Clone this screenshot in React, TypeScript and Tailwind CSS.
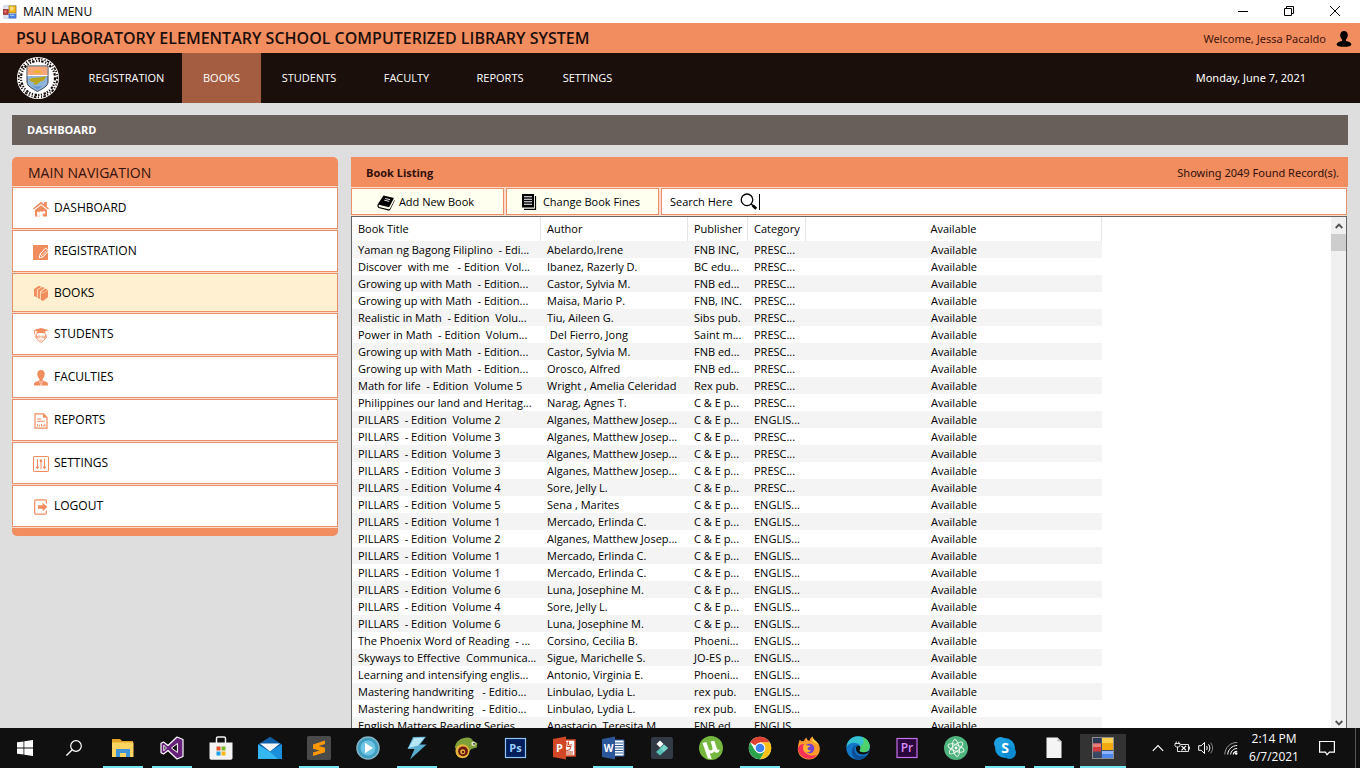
import type { ReactNode } from "react";

type Book = [title: string, author: string, publisher: string, category: string];

const books: Book[] = [
  ["Yaman ng Bagong Filiplino  - Edi...", "Abelardo,Irene", "FNB INC,", "PRESC..."],
  ["Discover  with me   - Edition  Vol...", "Ibanez, Razerly D.", "BC edu...", "PRESC..."],
  ["Growing up with Math  - Edition...", "Castor, Sylvia M.", "FNB ed...", "PRESC..."],
  ["Growing up with Math  - Edition...", "Maisa, Mario P.", "FNB, INC.", "PRESC..."],
  ["Realistic in Math  - Edition  Volu...", "Tiu, Aileen G.", "Sibs pub.", "PRESC..."],
  ["Power in Math  - Edition  Volum...", " Del Fierro, Jong", "Saint m...", "PRESC..."],
  ["Growing up with Math  - Edition...", "Castor, Sylvia M.", "FNB ed...", "PRESC..."],
  ["Growing up with Math  - Edition...", "Orosco, Alfred", "FNB ed...", "PRESC..."],
  ["Math for life  - Edition  Volume 5", "Wright , Amelia Celeridad", "Rex pub.", "PRESC..."],
  ["Philippines our land and Heritag...", "Narag, Agnes T.", "C & E p...", "PRESC..."],
  ["PILLARS  - Edition  Volume 2", "Alganes, Matthew Josep...", "C & E p...", "ENGLIS..."],
  ["PILLARS  - Edition  Volume 3", "Alganes, Matthew Josep...", "C & E p...", "PRESC..."],
  ["PILLARS  - Edition  Volume 3", "Alganes, Matthew Josep...", "C & E p...", "PRESC..."],
  ["PILLARS  - Edition  Volume 3", "Alganes, Matthew Josep...", "C & E p...", "PRESC..."],
  ["PILLARS  - Edition  Volume 4", "Sore, Jelly L.", "C & E p...", "PRESC..."],
  ["PILLARS  - Edition  Volume 5", "Sena , Marites", "C & E p...", "ENGLIS..."],
  ["PILLARS  - Edition  Volume 1", "Mercado, Erlinda C.", "C & E p...", "ENGLIS..."],
  ["PILLARS  - Edition  Volume 2", "Alganes, Matthew Josep...", "C & E p...", "ENGLIS..."],
  ["PILLARS  - Edition  Volume 1", "Mercado, Erlinda C.", "C & E p...", "ENGLIS..."],
  ["PILLARS  - Edition  Volume 1", "Mercado, Erlinda C.", "C & E p...", "ENGLIS..."],
  ["PILLARS  - Edition  Volume 6", "Luna, Josephine M.", "C & E p...", "ENGLIS..."],
  ["PILLARS  - Edition  Volume 4", "Sore, Jelly L.", "C & E p...", "ENGLIS..."],
  ["PILLARS  - Edition  Volume 6", "Luna, Josephine M.", "C & E p...", "ENGLIS..."],
  ["The Phoenix Word of Reading  - ...", "Corsino, Cecilia B.", "Phoeni...", "ENGLIS..."],
  ["Skyways to Effective  Communica...", "Sigue, Marichelle S.", "JO-ES p...", "ENGLIS..."],
  ["Learning and intensifying englis...", "Antonio, Virginia E.", "Phoeni...", "ENGLIS..."],
  ["Mastering handwriting   - Editio...", "Linbulao, Lydia L.", "rex pub.", "ENGLIS..."],
  ["Mastering handwriting   - Editio...", "Linbulao, Lydia L.", "rex pub.", "ENGLIS..."],
  ["English Matters Reading Series...", "Anastacio, Teresita M.", "FNB ed...", "ENGLIS..."],
];

function Svg({ size, children, box = 16 }: { size: string; children: ReactNode; box?: number }) {
  return (
    <svg className={`shrink-0 ${size}`} viewBox={`0 0 ${box} ${box}`} fill="none" aria-hidden="true">
      {children}
    </svg>
  );
}

const FormIcon = ({ size }: { size: string }) => (
  <Svg size={size}>
    <rect x="1" y="1" width="14" height="14" fill="#dfe6f0" stroke="#9fb0c8" strokeWidth=".6" />
    <rect x="6.8" y="1" width="8" height="8" fill="#f4b71d" stroke="#8a6a14" strokeWidth=".6" />
    <rect x="8" y="2" width="4" height="4" fill="#ffe07a" />
    <rect x=".5" y="5" width="5.4" height="6" fill="#c43a35" stroke="#7d1b19" strokeWidth=".6" />
    <rect x="1.8" y="6.5" width="2" height="2" fill="#f09a90" />
    <rect x="6.8" y="10.3" width="8" height="4.6" fill="#4b86e8" stroke="#2a57a8" strokeWidth=".6" />
    <rect x="8" y="11" width="5" height="1.6" fill="#9cc1ff" />
  </Svg>
);

const FormIconLarge = () => (
  <Svg size="size-6" box={24}>
    <rect x="1.500" y="1.500" width="21" height="21" fill="#44506a" stroke="#8d8d8d" />
    <rect x="2" y="2" width="8" height="5.500" fill="#2e3a55" />
    <rect x="2" y="7.500" width="8" height="8" fill="#d2393c" />
    <rect x="2" y="7.500" width="8" height="3.500" fill="#e87b78" />
    <rect x="2" y="16.500" width="8" height="5.500" fill="#3c4763" />
    <rect x="11" y="2" width="11" height="12" fill="#f2a90f" />
    <rect x="11" y="2" width="11" height="5" fill="#fbd04d" />
    <rect x="11" y="15" width="11" height="7" fill="#4b86e8" />
    <rect x="11" y="15" width="11" height="3" fill="#8db5fb" />
  </Svg>
);

const O = "#f18c5f";

const sideItems: { label: string; active?: boolean; icon: ReactNode }[] = [
  {
    label: "DASHBOARD",
    icon: (
      <>
        <path d="M0 7.400 8 .8l3 2.400V1h2.800v4.600L16 7.400l-.9 1.200L8 3 .9 8.600z" fill={O} />
        <path d="M2 8.900 8 4.200l6 4.700v6.600H9.800V10.500H7v5H2z" fill={O} />
        <path d="M4.200 10.800h2.600v4.700H4.200z" fill="#fff" />
        <rect x="10" y="10.300" width="2.200" height="2.400" fill="#fff" />
      </>
    ),
  },
  {
    label: "REGISTRATION",
    icon: (
      <>
        <path d="M0 1h15v15H0z" fill={O} />
        <path d="m6.200 13.800.9-3.800 5.600-6 3 2.900-5.700 6z" stroke="#fff" strokeWidth="1" fill={O} />
        <path d="m7.300 10.200 2.500 2.600M9.600 11 13.600 6.600" stroke="#fff" strokeWidth=".8" />
      </>
    ),
  },
  {
    label: "BOOKS",
    active: true,
    icon: (
      <>
        <path d="M1 4 6 .8l2.400 1L4 4.800v7.400L1 11z" fill={O} />
        <path d="M4.600 5.300 9.300 2l2.300 1L7 6.400v7.700l-2.400-1z" fill={O} />
        <path d="m7.600 6.900 5-3.300L15 5v7l-5 4-2.400-1.200z" fill={O} />
        <path d="M7.600 6.900 10 8.200 15 5M4.300 5v7.600M7.300 6.500v7.800" stroke="#fdeccb" strokeWidth=".6" />
      </>
    ),
  },
  {
    label: "STUDENTS",
    icon: (
      <>
        <path d="M0 3.200 8 1l8 2.200L8 5.600z" fill={O} />
        <path d="M3.600 4.400v2.400c2.200-1 6.600-1 8.800 0V4.400" fill={O} />
        <path d="M1.600 4v3.400" stroke={O} strokeWidth=".9" />
        <path d="M3.400 7c0 5 2 8 4.600 8s4.600-3 4.600-8M2.600 8.400c-.7 2 .3 3 1.300 3M13.400 8.400c.7 2-.3 3-1.300 3" stroke={O} strokeWidth=".9" />
        <path d="M4.600 9.200h2.600v1.600H4.600zM8.800 9.200h2.600v1.600H8.800zM6.300 13h3.400" stroke={O} strokeWidth=".7" />
      </>
    ),
  },
  {
    label: "FACULTIES",
    icon: (
      <>
        <path d="M8 0c2.500 0 3.800 1.800 3.700 4 0 2.200-1 4-2 4.800v1.600l4.300 1.800c.8.400 1 1.500 1 3.200H1c0-1.700.2-2.800 1-3.200l4.300-1.800V8.800c-1-.8-2-2.600-2-4.800C4.200 1.800 5.500 0 8 0z" fill={O} />
        <path d="M6.400 10.800 8 12l1.600-1.200-.8 4.600H7.200z" fill="#fff" />
        <path d="m8 11.600.8 1-.4 2.800h-.8l-.4-2.800z" fill={O} />
      </>
    ),
  },
  {
    label: "REPORTS",
    icon: (
      <>
        <path d="M2 .8h8.600L14 4.400v10.800H2z" stroke={O} strokeWidth="1.200" />
        <path d="M10 .8v4h4z" fill={O} />
        <path d="M4.200 6h4M4.200 8.200h7.600" stroke={O} strokeWidth="1.100" />
        <path d="M4.500 13.500v-2.300M6.500 13.500v-1.500M8.500 13.500v-2.500M10.300 13.500V12M11.900 13.500v-2.700" stroke={O} strokeWidth="1" />
      </>
    ),
  },
  {
    label: "SETTINGS",
    icon: (
      <>
        <rect x=".5" y=".5" width="15" height="15" rx=".6" stroke={O} />
        <path d="M4.500 3v10M8 3v10M11.500 3v10" stroke={O} strokeWidth="1" />
        <circle cx="4.500" cy="11.200" r="1.300" fill={O} />
        <circle cx="8" cy="5" r="1.300" fill={O} />
        <circle cx="11.500" cy="11.200" r="1.300" fill={O} />
      </>
    ),
  },
  {
    label: "LOGOUT",
    icon: (
      <>
        <path d="M13.400 4.500V2.200c0-.8-.4-1.400-1.200-1.400H3c-.8 0-1.300.6-1.300 1.400v11.600c0 .8.500 1.400 1.300 1.400h9.200c.8 0 1.200-.6 1.200-1.400v-2.300" stroke={O} strokeWidth="1.200" />
        <path d="M5 6.300h4.600V3.800L14.400 8l-4.800 4.200V9.700H5z" fill={O} />
      </>
    ),
  },
];

const topTabs = [
  { label: "REGISTRATION", cls: "w-[111px]" },
  { label: "BOOKS", cls: "w-[79px] bg-[#a45d40]" },
  { label: "STUDENTS", cls: "w-24" },
  { label: "FACULTY", cls: "w-[99px]" },
  { label: "REPORTS", cls: "w-[88px]" },
  { label: "SETTINGS", cls: "w-[87px]" },
];

const Seal = () => (
  <svg className="size-11 shrink-0" viewBox="0 0 44 44" aria-hidden="true">
    <circle cx="22" cy="22" r="21" fill="#fff" />
    <circle cx="22" cy="22" r="19.300" fill="none" stroke="#1b0f0b" strokeWidth="1.800" strokeDasharray="1.200 1.500 2.600 1.300 1 2.100" />
    <circle cx="22" cy="22" r="17" fill="none" stroke="#1b0f0b" strokeWidth="2.200" strokeDasharray="2.400 1.700 1.100 1.500 1.300 1.200" />
    <path d="M11 10h21v16c0 4-5 6.500-10.500 9.500C16 32.500 11 30 11 26z" fill="#8fb4dc" stroke="#39404c" strokeWidth="1" />
    <path d="M11.500 10.500h20v8.500h-20z" fill="#f7a678" />
    <path d="M17 16.800c1-3 8-3 9 0z" fill="#e8b71c" />
    <path d="M11.500 19.500h20" stroke="#fff" strokeWidth="1" />
    <path d="M13 23.500c3-2.500 9-1 17-3.500-1 4-3 5.500-6 5.500-2 3-4 4-7 2.500l2-2c-2 .5-5-.5-6-2.500z" fill="#b9a51c" />
    <path d="M16 29.500c3 1.500 8 1.500 11 0l-5.500 4z" fill="#5f94cf" />
  </svg>
);

type Task = { name: string; running?: boolean; active?: boolean; icon: ReactNode };

const tasks: Task[] = [
  {
    name: "Start",
    icon: <Svg size="size-4"><path d="M0 2.300 6.500 1.400v6.200H0zM7.300 1.300 16 0v7.600H7.300zM0 8.400h6.500v6.200L0 13.700zM7.300 8.400H16V16l-8.700-1.200z" fill="#fff" /></Svg>,
  },
  {
    name: "Search",
    icon: <Svg size="size-4"><circle cx="10" cy="6" r="5.300" stroke="#fff" strokeWidth="1.200" /><path d="M6.200 9.800.4 15.600" stroke="#fff" strokeWidth="1.300" /></Svg>,
  },
  {
    name: "File Explorer",
    running: true,
    icon: (
      <Svg size="size-6" box={24}>
        <path d="M1 3h8l2 2h11v16H1z" fill="#e3a529" />
        <path d="M1 6.500h21.500V21H1z" fill="#fcd462" />
        <path d="M5 13h14v8h-4v-4H9v4H5z" fill="#3f93d8" />
      </Svg>
    ),
  },
  {
    name: "Visual Studio",
    running: true,
    icon: (
      <Svg size="size-6" box={24}>
        <path d="M17 1 23 3.500v17L17 23 8 14.500 3.500 18 1 16.800V7.200L3.500 6 8 9.500z" fill="#68217a" stroke="#fff" strokeWidth="1.200" strokeLinejoin="round" />
        <path d="M17.400 7.500v9L11.500 12zM3.800 9.300v5.400L6.400 12z" fill="#111" stroke="#fff" strokeWidth="1" />
      </Svg>
    ),
  },
  {
    name: "Microsoft Store",
    icon: (
      <Svg size="size-6" box={24}>
        <path d="M7.500 7V2.500c0-1 .6-1.500 1.500-1.500h6c.9 0 1.500.5 1.500 1.500V7" stroke="#f3f3f3" strokeWidth="1.500" />
        <path d="M.5 6.500h23V22c0 1-.7 1.700-1.700 1.700H2.200C1.200 23.700.5 23 .5 22z" fill="#f3f3f3" />
        <path d="M7.500 10.500h4v4h-4z" fill="#e8522a" />
        <path d="M12.500 10.500h4v4h-4z" fill="#7db928" />
        <path d="M7.500 15.500h4v4h-4z" fill="#1aa1e2" />
        <path d="M12.500 15.500h4v4h-4z" fill="#fdb913" />
      </Svg>
    ),
  },
  {
    name: "Mail",
    icon: (
      <Svg size="size-6" box={24}>
        <path d="M0 8.500 12 .8l12 7.700V23H0z" fill="#0f5fa8" />
        <path d="M0 8.500 12 16l12-7.500V23H0z" fill="#35b8f1" />
        <path d="M2 7.500h20l-10 8z" fill="#f5f9fc" />
        <path d="m24 8.500-12 7.500L20 23h4z" fill="#1c8fdc" />
      </Svg>
    ),
  },
  {
    name: "Sublime Text",
    running: true,
    icon: (
      <Svg size="size-6" box={24}>
        <rect width="24" height="24" rx="1.500" fill="#4a4a4a" />
        <path d="m18 4.500-12 4v4.300l6.500 1.700L6 16.500V20l12-3.800v-4.400l-6.300-1.700L18 8z" fill="#ff9800" />
      </Svg>
    ),
  },
  {
    name: "Media Player",
    icon: (
      <Svg size="size-6" box={24}>
        <circle cx="12" cy="12" r="11" fill="#3f9dbf" stroke="#7fb4c4" strokeWidth="1.500" />
        <circle cx="12" cy="12" r="7.500" fill="#6fc6e4" />
        <path d="M9 6.800 17 12l-8 5.200z" fill="#fff" />
      </Svg>
    ),
  },
  {
    name: "Winamp",
    running: true,
    icon: (
      <Svg size="size-6" box={24}>
        <path d="M8 1 21 .8l-6 7.700h6.500L5 23.500 9.500 13H2.500z" fill="#5aaed0" />
        <path d="M9 2 19.500 1.500l-6.500 8-9.500 2.500z" fill="#b9e6f5" />
      </Svg>
    ),
  },
  {
    name: "Chameleon",
    icon: (
      <Svg size="size-6" box={24}>
        <path d="M.8 12C1.500 5 7 1.500 13.500 1.500c3 0 4.800 1.500 5.800 4l4.200 1.700-.8 4.300-5.200 1.500L13 17z" fill="#7f9f3a" />
        <circle cx="8.500" cy="15.300" r="7" fill="#e7b53c" />
        <circle cx="9" cy="15.300" r="4.900" fill="#6b1713" />
        <circle cx="8.700" cy="15.700" r="2.500" fill="#e7b53c" />
        <circle cx="9" cy="16" r="1.200" fill="#6b1713" />
        <circle cx="19.500" cy="7.800" r="2.200" fill="#dfe5c8" />
        <circle cx="20" cy="7.800" r=".9" fill="#222" />
      </Svg>
    ),
  },
  {
    name: "Photoshop",
    icon: (
      <Svg size="size-6" box={24}>
        <rect x="2.500" y="2.500" width="20" height="19" fill="#001d5c" stroke="#8cc5f5" strokeWidth="1.200" />
        <text x="12.500" y="16" textAnchor="middle" fontSize="11" fontWeight="700" fill="#9bd0fb">Ps</text>
      </Svg>
    ),
  },
  {
    name: "PowerPoint",
    icon: (
      <Svg size="size-6" box={24}>
        <path d="M12 4h11v16H12z" fill="#fff" stroke="#d24726" strokeWidth="1.500" />
        <path d="M15 6.500a4 4 0 1 0 4 4h-4zM16.500 5.500v3.500H20M14 16h7M14 18h7" stroke="#d24726" strokeWidth="1" />
        <path d="m1 3 13-2.500v23L1 21z" fill="#d24726" />
        <text x="7.500" y="16" textAnchor="middle" fontSize="11" fontWeight="700" fill="#fff">P</text>
      </Svg>
    ),
  },
  {
    name: "Word",
    running: true,
    icon: (
      <Svg size="size-6" box={24}>
        <path d="M12 4h11v16H12z" fill="#fff" stroke="#2b579a" strokeWidth="1" />
        <path d="M14 7h8M14 9.500h8M14 12h8M14 14.500h8M14 17h8" stroke="#2b579a" strokeWidth="1.200" />
        <path d="m1 3 13-2.500v23L1 21z" fill="#2b579a" />
        <text x="7.500" y="16" textAnchor="middle" fontSize="10" fontWeight="700" fill="#fff">W</text>
      </Svg>
    ),
  },
  {
    name: "Filmora",
    icon: (
      <Svg size="size-6" box={24}>
        <rect x="1" y="1" width="22" height="22" rx="2.500" fill="#323a45" />
        <path d="m10 4.500 3.500 3.500-3.500 3.500L6.500 8z" fill="#fff" />
        <path d="m14 8.500 4 3.500-8 7.500L6 16z" fill="#55bfb4" />
        <path d="m14 8.500 4 3.500-4 3.700-4-3.500z" fill="#7ad3c8" />
      </Svg>
    ),
  },
  {
    name: "uTorrent",
    icon: (
      <Svg size="size-6" box={24}>
        <circle cx="12" cy="12" r="12" fill="#76b83f" />
        <path d="M3.500 7 7.300 6 9.800 13c.7 2 3.400 1.800 3.700 0 .3-1.600-1-4.500-1.900-7.500l3.700-.8 2.700 8c.5 1.400 1.500 1.300 2.600.7 0 1.900-1.300 3.200-2.900 3.300-1.200.1-2-.4-2.600-1.400-.7 1.600-2.300 2.500-4.300 2l1.900 5.800-3.700-.5z" fill="#fff" />
      </Svg>
    ),
  },
  {
    name: "Chrome",
    running: true,
    icon: (
      <Svg size="size-6" box={24}>
        <circle cx="12" cy="12" r="11.200" fill="#fff" />
        <path d="M12 12 2.300 6.400A11.200 11.200 0 0 1 21.700 6.400H12z" fill="#e0402f" />
        <path d="M21.700 6.400A11.200 11.200 0 0 1 12 23.200l5-8.400L12 6.400z" fill="#fbc116" />
        <path d="M2.300 6.400A11.200 11.200 0 0 0 12 23.200l4.800-8.400H7.100z" fill="#2ba24c" />
        <circle cx="12" cy="12" r="5.400" fill="#fff" />
        <circle cx="12" cy="12" r="4.300" fill="#3f80ee" />
      </Svg>
    ),
  },
  {
    name: "Firefox",
    icon: (
      <Svg size="size-6" box={24}>
        <path d="M2.500 4c1 0 1.800.8 2.300 1.600C5.500 5 6 5 7 5.200 7.300 3.500 8.300 2.200 9.500 1.500c0 2 1.500 2.700 3 3.500C12.800 3 14 1 15.500.5 15.500 3.500 20 5 22 9c3 7-2.500 14.500-10 14.500S.5 18 .8 12.500C.9 9 2 7 2.500 4z" fill="#ff9a2c" />
        <path d="M1 13c1 9 13 13.500 19.500 5.500-2.500 1.500-6 1.500-8.500.5C6 17 5 12 7 8 4 8 1 10 1 13z" fill="#f5315b" />
        <circle cx="12.500" cy="12.500" r="4.800" fill="#7342d0" />
        <path d="M6.500 9.500c3-.8 4.500.5 7 .3-1 1.500-2.800 1.500-3 2.700 0 1.400 2 2.300 3.500 1.500-1 3-6 3.500-7.600-.3z" fill="#ffb42e" />
        <path d="M15.500.5C15.500 3.500 20 5 22 9c-1.500-1.500-2.500-1.500-4-2-2.500-1-3.500-3-2.500-6.500z" fill="#ffd83d" />
      </Svg>
    ),
  },
  {
    name: "Edge",
    icon: (
      <Svg size="size-6" box={24}>
        <circle cx="12" cy="12" r="11.700" fill="#1478c8" />
        <path d="M.4 11C1.200 4.500 6 .3 12 .3c7 0 11.700 4.700 11.700 10 0 4-3 6-6.500 6-2.500 0-4-1-3.700-2 1.200-1.500 1.500-3 .3-4.800C11.500 5.600 3.500 5.600.4 11z" fill="#35c1d0" />
        <path d="M16 1c4.800 1.500 7.700 5.300 7.700 9.300 0 4-3 6-6.500 6-2.500 0-4-1-3.700-2 1.200-1.500 1.500-3 .3-4.800C18 10 19 5 16 1z" fill="#4fd06b" />
        <path d="M8.500 13c0 6 6 9.200 13 5.500-2.500 3.500-5.500 5.200-9.500 5.200C7 22.500 4.500 17 6.500 12.500c1-2.500 3.500-3.800 5.700-3.300C9.500 9.500 8.500 11 8.500 13z" fill="#0c4f98" />
        <path d="M13.500 14.300c-.3 1 1.200 2 3.700 2 2 0 4-.4 6.300-1.600-1 3-6.500 5-10.500 3-2.500-1.500-3.500-4.200-3-6 .5-1.700 2.300-2.300 3.600-1.600 1 1.500 1 2.800-.1 4.200z" fill="#111" />
      </Svg>
    ),
  },
  {
    name: "Premiere",
    icon: (
      <Svg size="size-6" box={24}>
        <rect x="2" y="2.500" width="20" height="19" fill="#29063b" stroke="#c372ea" strokeWidth="1.200" />
        <text x="12" y="16" textAnchor="middle" fontSize="12" fontWeight="600" fill="#d78cf7">Pr</text>
      </Svg>
    ),
  },
  {
    name: "Atom",
    icon: (
      <Svg size="size-6" box={24}>
        <circle cx="12" cy="12" r="12" fill="#4fb37e" />
        <g stroke="#e6f5ec" strokeWidth="1">
          <ellipse cx="12" cy="12" rx="8.500" ry="3.200" transform="rotate(20 12 12)" />
          <ellipse cx="12" cy="12" rx="8.500" ry="3.200" transform="rotate(80 12 12)" />
          <ellipse cx="12" cy="12" rx="8.500" ry="3.200" transform="rotate(140 12 12)" />
        </g>
        <circle cx="12" cy="12" r="1.400" fill="#fff" />
      </Svg>
    ),
  },
  {
    name: "Skype",
    running: true,
    icon: (
      <Svg size="size-6" box={24}>
        <circle cx="12" cy="12" r="10" fill="#1499de" />
        <circle cx="7.500" cy="7.500" r="6.500" fill="#1d9fe2" />
        <circle cx="16.500" cy="16.500" r="6.500" fill="#0d8bd2" />
        <text x="12" y="17" textAnchor="middle" fontSize="14" fontWeight="700" fill="#fff">S</text>
      </Svg>
    ),
  },
  {
    name: "Document",
    running: true,
    icon: (
      <Svg size="size-6" box={24}>
        <path d="M4.500 1.500h11l4 4V22h-15z" fill="#f4f4f4" />
        <path d="M15.500 1.500v4h4z" fill="#bdbdbd" />
      </Svg>
    ),
  },
  { name: "Library System", running: true, active: true, icon: <FormIconLarge /> },
];

const columns = [
  { label: "Book Title", cls: "w-[189px] pl-[6px] text-left" },
  { label: "Author", cls: "w-[147px] pl-[6px] text-left" },
  { label: "Publisher", cls: "w-[60px] pl-[6px] text-left" },
  { label: "Category", cls: "w-[58px] pl-[6px] text-left" },
  { label: "Available", cls: "w-[296px] text-center" },
];

export default function App() {
  return (
    <div className="flex h-screen flex-col overflow-hidden bg-[#dedede] font-['Open_Sans','Noto_Sans',sans-serif] text-[11px] text-black">
      <div className="flex h-[23px] shrink-0 items-center bg-white pl-[3px]">
        <FormIcon size="size-[14px]" />
        <span className="ml-[6px] text-[12px] leading-4">MAIN MENU</span>
        <div className="mr-[2px] ml-auto flex h-full items-center">
          <button type="button" aria-label="Minimize" className="flex h-full w-[46px] items-center justify-center pb-[2px]">
            <Svg size="size-3" box={12}><path d="M1 6.500h10" stroke="#000" /></Svg>
          </button>
          <button type="button" aria-label="Restore" className="flex h-full w-[46px] items-center justify-center pb-[2px]">
            <Svg size="size-3" box={12}><path d="M1.500 3.500h7v7h-7zM3.500 3V1.500h7v7H9" stroke="#000" /></Svg>
          </button>
          <button type="button" aria-label="Close" className="flex h-full w-[46px] items-center justify-center pb-[2px]">
            <Svg size="size-3" box={12}><path d="m1 1 10 10M11 1 1 11" stroke="#000" /></Svg>
          </button>
        </div>
      </div>

      <header className="flex h-[30px] shrink-0 items-center justify-between bg-[#f28d60] pr-2 pl-4">
        <h1 className="text-[16px] leading-5 font-semibold text-[#1c0f0b]">PSU LABORATORY ELEMENTARY SCHOOL COMPUTERIZED LIBRARY SYSTEM</h1>
        <div className="flex items-center gap-[10px] pt-px">
          <span className="font-['Noto_Sans',sans-serif] text-[11px] leading-4 text-[#421509]">Welcome, Jessa Pacaldo</span>
          <Svg size="size-4">
            <path d="M8 0c2.400 0 3.800 1.700 3.800 4 0 1.900-.8 3.600-1.900 4.500v1.500c3 .6 5.500 1.500 5.500 3.500 0 1.700-3.500 2.300-7.400 2.300S.6 15.200.6 13.500c0-2 2.500-2.900 5.500-3.500V8.500C5 7.600 4.200 5.900 4.200 4 4.200 1.700 5.600 0 8 0z" fill="#000" />
          </Svg>
        </div>
      </header>

      <nav className="flex h-[50px] shrink-0 items-center bg-[#1b0f0b] pl-4 text-white">
        <Seal />
        <div className="ml-[11px] flex h-full">
          {topTabs.map((t) => (
            <button key={t.label} type="button" className={`h-full text-[11px] leading-4 ${t.cls}`}>
              {t.label}
            </button>
          ))}
        </div>
        <span className="mr-[54px] ml-auto font-['Noto_Sans',sans-serif] text-[11px] leading-4">Monday, June 7, 2021</span>
      </nav>

      <h2 className="mx-3 mt-3 flex h-[30px] shrink-0 items-center bg-[#685f5b] pl-[15px] text-[11px] font-bold text-white">DASHBOARD</h2>

      <main className="flex min-h-0 flex-1 gap-[13px] px-3 pt-3">
        <aside className="flex w-[326px] shrink-0 flex-col gap-px self-start overflow-hidden rounded-[5px] bg-[#fbdccd]">
          <h3 className="flex h-[29px] items-center bg-[#f28d60] pt-[3px] pl-4 text-[14px] leading-4 text-[#32120a]">MAIN NAVIGATION</h3>
          {sideItems.map((s) => (
            <button
              key={s.label}
              type="button"
              className={`flex items-center gap-[5px] border border-[#ea8f68] pl-5 text-[12px] leading-4 ${s.active ? "h-[39px] bg-[#fef0d0]" : "h-[42px] bg-white"}`}
            >
              <span className="pt-px"><Svg size="size-4">{s.icon}</Svg></span>
              {s.label}
            </button>
          ))}
          <div className="h-2 bg-[#f28d60]" />
        </aside>

        <section className="flex min-w-0 flex-1 flex-col">
          <div className="flex h-[30px] shrink-0 items-center justify-between bg-[#f28d60] pt-[2px] pr-[9px] pl-[15px] text-[11px] leading-4 text-[#32100a]">
            <h3 className="font-bold">Book Listing</h3>
            <span className="font-['Noto_Sans',sans-serif]">Showing 2049 Found Record(s).</span>
          </div>
          <div className="mr-px flex h-[29px] shrink-0 gap-[2px] bg-[#fbdccd] py-px text-[11px] leading-4">
            <button type="button" className="flex w-[153px] items-center justify-center gap-1 border border-[#ea8f68] bg-[#fffff0] pr-1">
              <Svg size="size-[18px]" box={18}>
                <path d="M6.500 2.500 17 5l-4.500 8.500c-.3.600-.8.800-1.400.6L2 11.800c-.8 1 0 2.200 1 2.500l8.500 2c.8.200 1.300-.1 1.600-.7L17.500 7l.3.600-4.400 9c-.4.900-1.200 1.200-2.100 1L2.500 15.300C.4 14.700-.1 12.700.9 11z" fill="#000" />
                <path d="m8.200 5.500 5 1.200M7.300 7.200l5 1.200" stroke="#fff" strokeWidth=".9" />
              </Svg>
              Add New Book
            </button>
            <button type="button" className="flex w-[153px] items-center justify-center gap-[6px] border border-[#ea8f68] bg-[#fffff0] pr-1">
              <Svg size="size-4">
                <path d="M1 0h12v13.500H1z" fill="#000" />
                <path d="M14.500 2v13.300H3" stroke="#000" strokeWidth="1.200" />
                <path d="M3 2.700h8M3 5.200h8M3 7.700h8M3 10.200h8" stroke="#fff" strokeWidth="1.100" />
              </Svg>
              Change Book Fines
            </button>
            <div className="flex min-w-0 flex-1 items-center border border-[#ea8f68] bg-white pl-2">
              <label htmlFor="search" className="flex items-center gap-[7px]">
                Search Here
                <Svg size="size-[18px]" box={18}>
                  <circle cx="7" cy="6.800" r="5.800" stroke="#000" strokeWidth="1.300" />
                  <path d="m11 10.800 2 2" stroke="#000" strokeWidth="1.400" />
                  <path d="m12.800 12.600 3.400 3.200" stroke="#000" strokeWidth="2.800" />
                </Svg>
              </label>
              <span className="ml-px h-4 w-px bg-black" />
              <input id="search" type="text" className="min-w-0 flex-1 px-1 outline-none" />
            </div>
          </div>

          <div className="mr-px flex min-h-0 flex-1 border-x border-t border-[#646464] bg-white">
            <div className="min-w-0 flex-1 overflow-hidden">
              <table className="w-[750px] table-fixed border-separate border-spacing-0 text-[11px] leading-[17px]">
                <thead>
                  <tr className="h-6">
                    {columns.map((c) => (
                      <th key={c.label} scope="col" className={`overflow-hidden border-r border-[#e5e5e5] pt-0 pb-[2px] font-normal whitespace-pre ${c.cls}`}>
                        {c.label}
                      </th>
                    ))}
                  </tr>
                </thead>
                <tbody>
                  {books.map((b, i) => (
                    <tr key={i} className="h-[17px] odd:bg-[#f4f4f4]">
                      {b.map((v, j) => (
                        <td key={j} className="overflow-hidden py-0 pl-[6px] whitespace-pre">{v}</td>
                      ))}
                      <td className="py-0 text-center">Available</td>
                    </tr>
                  ))}
                </tbody>
              </table>
            </div>
            <div className="flex w-[15px] shrink-0 flex-col bg-[#f0f0f0]">
              <button type="button" aria-label="Scroll up" className="flex h-[17px] items-center justify-center">
                <Svg size="size-2" box={8}><path d="m.7 6 3.300-3.400L7.300 6" stroke="#505050" strokeWidth="1.800" /></Svg>
              </button>
              <div className="h-[17px] bg-[#cdcdcd]" />
              <button type="button" aria-label="Scroll down" className="mt-auto flex h-[10px] items-center justify-center">
                <Svg size="size-2" box={8}><path d="m.7 2 3.300 3.400L7.300 2" stroke="#505050" strokeWidth="1.800" /></Svg>
              </button>
            </div>
          </div>
        </section>
      </main>

      <footer className="flex h-10 shrink-0 bg-[#101010] text-white">
        {tasks.map((t) => (
          <button key={t.name} type="button" aria-label={t.name} className="flex w-[49px] shrink-0 flex-col items-center">
            <span className={`flex w-[46px] flex-1 items-center justify-center ${t.active ? "mt-[6px] bg-[#333] pb-1" : "pt-px"}`}>{t.icon}</span>
            <span className={`h-[2px] ${t.active ? "w-[46px]" : "w-10"} ${t.running ? "bg-[#76e5f2]" : ""}`} />
          </button>
        ))}
        <div className="ml-auto flex items-center">
          <button type="button" aria-label="Show hidden icons" className="flex w-6 justify-center">
            <Svg size="size-3" box={12}><path d="m.8 8.800 5.200-5.200 5.200 5.200" stroke="#fff" strokeWidth="1.200" /></Svg>
          </button>
          <button type="button" aria-label="Battery" className="flex w-6 justify-center">
            <Svg size="size-4">
              <path d="M6.500 4.500h8v7h-8M15.500 6.500v3" stroke="#ddd" />
              <path d="M1 3.500h5v2.200L4.800 7H2.200L1 5.700zM2.200 3.500v-2M4.800 3.500v-2M3.500 7v4.500h3" stroke="#fff" strokeWidth=".9" />
              <path d="m7.500 5.800 4.500 4.500M12 5.800l-4.500 4.500" stroke="#fff" strokeWidth="1.200" />
            </Svg>
          </button>
          <button type="button" aria-label="Volume" className="flex w-6 justify-center">
            <Svg size="size-4">
              <path d="M.7 5.700h2.500L6.500 2.500v11L3.200 10.300H.7z" stroke="#fff" />
              <path d="M8.500 6c.9 1.200.9 2.800 0 4M10.500 4.300c1.800 2.200 1.800 5.200 0 7.400" stroke="#fff" />
              <path d="M12.700 2.700c2.500 3.100 2.500 7.500 0 10.600" stroke="#888" />
            </Svg>
          </button>
          <button type="button" aria-label="Network" className="flex w-[26px] justify-center">
            <Svg size="size-[14px]" box={14}>
              <path d="M.8 13.500C1 6.500 6.500 1.300 13.200 1.500" stroke="#999" />
              <path d="M3.700 13.500c.3-5 4.400-9 9.500-9M6.600 13.500c.3-3.500 3-6 6.600-6" stroke="#fff" />
              <path d="M9.300 13.500c.2-1.900 1.800-3.200 3.900-3.200" stroke="#fff" strokeWidth="1.200" />
              <circle cx="12.200" cy="12.500" r="1.300" fill="#fff" />
            </Svg>
          </button>
          <div className="flex w-[60px] flex-col items-center text-[12px] leading-[18px]">
            <span>2:14 PM</span>
            <span>6/7/2021</span>
          </div>
          <button type="button" aria-label="Notifications" className="flex w-[46px] justify-center">
            <Svg size="size-4">
              <path d="M.6 1.500h14.800v10.700h-5L8 14.700l-1.500-2.500H.6z" stroke="#fff" strokeWidth="1.200" />
            </Svg>
          </button>
          <span className="mr-1 ml-[5px] h-10 w-px bg-[#555]" />
        </div>
      </footer>
    </div>
  );
}
